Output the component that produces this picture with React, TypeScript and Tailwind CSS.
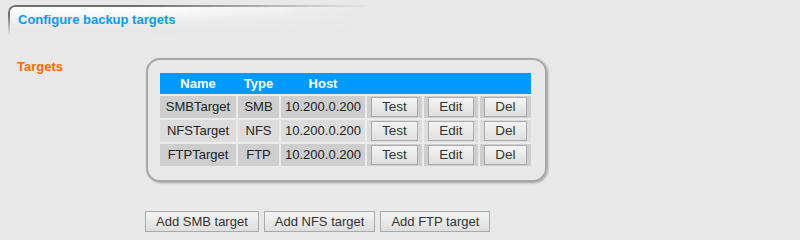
import React from "react";

const rows = [
  { name: "SMBTarget", type: "SMB", host: "10.200.0.200", bg: "bg-[#cecece]" },
  { name: "NFSTarget", type: "NFS", host: "10.200.0.200", bg: "bg-[#dcdcdc]" },
  { name: "FTPTarget", type: "FTP", host: "10.200.0.200", bg: "bg-[#cecece]" },
];

function Btn({ children, className = "" }: { children: React.ReactNode; className?: string }) {
  return (
    <button
      className={
        "h-[20px] border border-[#a9a9a9] bg-[linear-gradient(to_bottom,#f4f4f4,#dedede)] px-[10px] text-[13.5px] leading-[18px] text-[#333] " +
        className
      }
    >
      {children}
    </button>
  );
}

export default function App() {
  return (
    <div
      className="h-[240px] w-[800px] overflow-hidden bg-[#e8e8e8] text-[13px] text-[#222]"
      style={{ fontFamily: '"Liberation Sans", Arial, sans-serif' }}
    >
      <div className="pl-2 pt-[5px]">
        <div className="relative h-[30px] w-[380px]">
          <div className="absolute inset-0 rounded-tl-[7px] border-l-2 border-t-2 border-[#6f6f6f] bg-[linear-gradient(to_bottom,#ffffff,#e8e8e8_80%)] [mask-composite:intersect] [mask-image:linear-gradient(to_right,#000_35%,transparent_95%),linear-gradient(to_bottom,#000_35%,transparent_100%)]" />
          <div className="relative pl-[10px] pt-[7px] text-[13px] font-bold leading-[16px] text-[#0a9af2]">
            Configure backup targets
          </div>
        </div>
      </div>

      <div className="mt-[23px] flex">
        <div className="w-[146px] shrink-0 pl-[17px] pt-[1px] font-bold leading-[16px] text-[#ff6a00]">Targets</div>
        <div className="flex flex-col">
          <div className="w-[401px] rounded-[14px] border-2 border-[#a8a8a8] pb-[14px] pl-[12px] pr-[13px] pt-[13px] shadow-[1px_1px_2px_rgba(0,0,0,0.3)]">
            <table className="w-[371px] table-fixed border-separate border-spacing-0 text-center">
              <colgroup>
                <col className="w-[76px]" />
                <col className="w-[43px]" />
                <col className="w-[86px]" />
                <col className="w-[57px]" />
                <col className="w-[56px]" />
                <col className="w-[53px]" />
              </colgroup>
              <thead>
                <tr className="h-[21px] bg-[#0099ff] font-bold text-white">
                  <th className="p-0 font-bold">Name</th>
                  <th className="p-0 pl-[2px] font-bold">Type</th>
                  <th className="p-0 pl-[2px] font-bold">Host</th>
                  <th className="p-0" />
                  <th className="p-0" />
                  <th className="p-0" />
                </tr>
              </thead>
              <tbody>
                {rows.map((r) => (
                  <tr key={r.name} className="h-[24px]">
                    <td className={`border-t-2 border-[#ececec] p-0 ${r.bg}`}>{r.name}</td>
                    <td className={`border-l-2 border-t-2 border-[#ececec] p-0 ${r.bg}`}>{r.type}</td>
                    <td className={`border-l-2 border-t-2 border-[#ececec] p-0 ${r.bg}`}>{r.host}</td>
                    <td className={`border-l-2 border-t-2 border-[#ececec] p-0 align-middle ${r.bg}`}>
                      <Btn>Test</Btn>
                    </td>
                    <td className={`border-l-2 border-t-2 border-[#ececec] p-0 align-middle ${r.bg}`}>
                      <Btn>Edit</Btn>
                    </td>
                    <td className={`border-l-2 border-t-2 border-[#ececec] p-0 align-middle ${r.bg}`}>
                      <Btn>Del</Btn>
                    </td>
                  </tr>
                ))}
              </tbody>
            </table>
          </div>
          <div className="-ml-px mt-[29px] flex gap-[5px]">
            <Btn className="h-[21px] text-[13px]">Add SMB target</Btn>
            <Btn className="h-[21px] text-[13px]">Add NFS target</Btn>
            <Btn className="h-[21px] text-[13px]">Add FTP target</Btn>
          </div>
        </div>
      </div>
    </div>
  );
}
